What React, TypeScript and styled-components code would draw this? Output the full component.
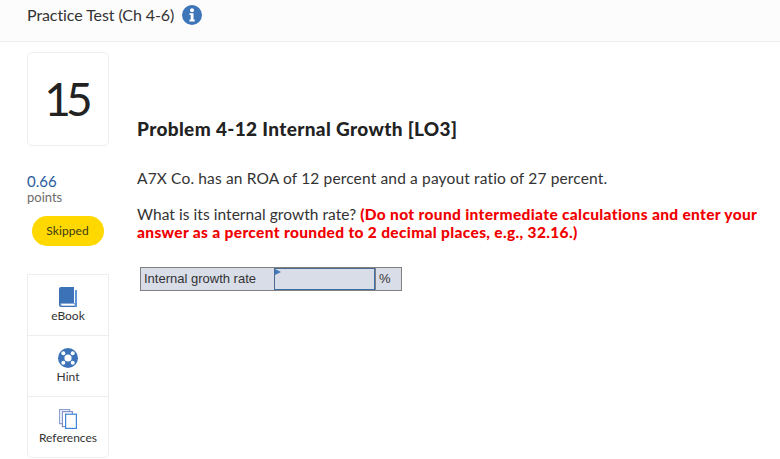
import React from 'react';
import styled, { createGlobalStyle } from 'styled-components';

const GlobalStyle = createGlobalStyle`
  html, body { margin: 0; padding: 0; background: #fff; }
  body { font-family: Lato, "Open Sans", sans-serif; color: #2b2b2b; }
`;

const Header = styled.header`
  height: 41px;
  background: #fcfcfc;
  border-bottom: 1px solid #eeeeee;
  display: flex;
  align-items: flex-start;
  gap: 8px;
  padding-left: 27px;
`;

const Title = styled.h2`
  margin: 5px 0 0;
  font-size: 16px;
  line-height: 20px;
  font-weight: 400;
  color: #333;
  letter-spacing: -0.08px;
`;

const InfoIcon = styled.svg`
  width: 20px;
  height: 20px;
  margin-top: 5px;
`;

const Body = styled.main`
  display: flex;
  gap: 28px;
  padding: 10px 0 0 27px;
`;

const Side = styled.aside`
  width: 82px;
  flex: none;
  display: flex;
  flex-direction: column;
`;

const NumberCard = styled.div`
  height: 94px;
  box-sizing: border-box;
  border: 1px solid #eeeeee;
  border-radius: 5px;
  display: flex;
  align-items: center;
  justify-content: center;
  font-size: 46px;
  font-weight: 400;
  letter-spacing: -5px;
  color: #222;
  padding: 0 4px 1px 0;
`;

const Score = styled.div`
  margin-top: 26px;
  font-size: 15px;
  line-height: 18px;
  color: #2a5b9c;
`;

const ScoreLabel = styled.div`
  font-size: 13px;
  line-height: 14px;
  color: #6b6b6b;
`;

const Badge = styled.div`
  align-self: center;
  margin: 12px 0 0 -1px;
  width: 72px;
  height: 30px;
  border-radius: 15px;
  background: #ffd800;
  color: #3a3a1a;
  font-size: 12px;
  letter-spacing: 0.1px;
  padding-bottom: 1px;
  box-sizing: border-box;
  display: flex;
  align-items: center;
  justify-content: center;
`;

const Tools = styled.nav`
  margin-top: 28px;
  border: 1px solid #eeeeee;
  border-radius: 0 0 5px 5px;
  display: flex;
  flex-direction: column;
`;

const Tool = styled.div`
  height: 60px;
  display: flex;
  flex-direction: column;
  align-items: center;
  padding-top: 12px;
  box-sizing: border-box;
  font-size: 12px;
  line-height: 14px;
  color: #333;
  gap: 2px;
  & + & {
    border-top: 1px solid #eeeeee;
    height: 61px;
  }
`;

const Content = styled.section`
  flex: 1;
  min-width: 0;
`;

const Heading = styled.h1`
  margin: 65px 0 0;
  font-size: 19px;
  line-height: 24px;
  font-weight: 900;
  color: #222;
  letter-spacing: 0.35px;
`;

const Paragraph = styled.p`
  margin: 28px 0 0;
  font-size: 15.5px;
  line-height: 18px;
  color: #333;
  width: 630px;
  letter-spacing: 0.15px;
`;

const Question = styled(Paragraph)`
  margin-top: 18px;
  letter-spacing: 0.05px;
`;

const Warning = styled.strong`
  color: #f00000;
  font-weight: 900;
  letter-spacing: 0.33px;
`;

const AnswerTable = styled.div`
  margin: 26px 0 0 3px;
  display: flex;
  width: 262px;
  height: 24px;
  box-sizing: border-box;
  border: 1px solid #808080;
  background: #d9dde8;
  font-family: "Liberation Sans", Arial, sans-serif;
  font-size: 13px;
  color: #333;
`;

const AnswerLabel = styled.div`
  width: 133px;
  padding-left: 3px;
  box-sizing: border-box;
  line-height: 21px;
`;

const AnswerInput = styled.div`
  position: relative;
  width: 101px;
  box-sizing: border-box;
  border: 1px solid #3f6fa8;
  border-left-color: #4c6a92;
  border-top-color: #4c6a92;
  box-shadow: 1px 0 0 #808080;
`;

const Corner = styled.span`
  position: absolute;
  top: 0;
  left: 0;
  border-style: solid;
  border-width: 3px 0 3px 6px;
  border-color: transparent transparent transparent #3f78bd;
`;

const AnswerUnit = styled.div`
  flex: 1;
  padding-left: 4px;
  line-height: 21px;
`;

const BookIcon = () => (
  <svg width="18" height="20" viewBox="0 0 18 20">
    <path d="M0 2a2 2 0 0 1 2-2h13v16H3a1.5 1.5 0 0 0 0 3h15V3h-2v17H2a2 2 0 0 1-2-2z" fill="#3b72b8" />
    <path d="M16 3h2v17H16z" fill="#5d96d8" />
    <path d="M3 16.5h13v2.5H3a1.25 1.25 0 0 1 0-2.5z" fill="#fff" stroke="#3b72b8" strokeWidth="0.6" />
  </svg>
);

const LifebuoyIcon = () => (
  <svg width="20" height="20" viewBox="0 0 20 20">
    <circle cx="10" cy="10" r="10" fill="#3b72b8" />
    <circle cx="10" cy="10" r="3.6" fill="#fff" />
    <g fill="#fff">
      <circle cx="5.3" cy="5.3" r="2" />
      <circle cx="14.7" cy="5.3" r="2" />
      <circle cx="5.3" cy="14.7" r="2" />
      <circle cx="14.7" cy="14.7" r="2" />
    </g>
  </svg>
);

const PagesIcon = () => (
  <svg width="18" height="20" viewBox="0 0 18 20" fill="#fff" strokeWidth="1.2">
    <rect x="0.6" y="0.6" width="10" height="14" stroke="#8d9fd0" />
    <rect x="3.4" y="2.6" width="10" height="15" stroke="#7f8fc8" />
    <rect x="6.6" y="5.2" width="10.8" height="14.2" stroke="#3f86d8" />
  </svg>
);

export default function App() {
  return (
    <>
      <GlobalStyle />
      <Header>
        <Title>Practice Test (Ch 4-6)</Title>
        <InfoIcon viewBox="0 0 20 20">
          <circle cx="10" cy="10" r="10" fill="#3d75b9" />
          <circle cx="10" cy="5.2" r="2" fill="#fff" />
          <path d="M7.5 8.2h4v6.4h1.2v1.9H7.5v-1.9h1.2v-4.5H7.5z" fill="#fff" />
        </InfoIcon>
      </Header>
      <Body>
        <Side>
          <NumberCard>15</NumberCard>
          <Score>0.66</Score>
          <ScoreLabel>points</ScoreLabel>
          <Badge>Skipped</Badge>
          <Tools>
            <Tool><BookIcon />eBook</Tool>
            <Tool><LifebuoyIcon />Hint</Tool>
            <Tool><PagesIcon />References</Tool>
          </Tools>
        </Side>
        <Content>
          <Heading>Problem 4-12 Internal Growth [LO3]</Heading>
          <Paragraph>A7X Co. has an ROA of 12 percent and a payout ratio of 27 percent.</Paragraph>
          <Question>
            What is its internal growth rate?{' '}
            <Warning>(Do not round intermediate calculations and enter your answer as a percent rounded to 2 decimal places, e.g., 32.16.)</Warning>
          </Question>
          <AnswerTable>
            <AnswerLabel>Internal growth rate</AnswerLabel>
            <AnswerInput><Corner /></AnswerInput>
            <AnswerUnit>%</AnswerUnit>
          </AnswerTable>
        </Content>
      </Body>
    </>
  );
}
